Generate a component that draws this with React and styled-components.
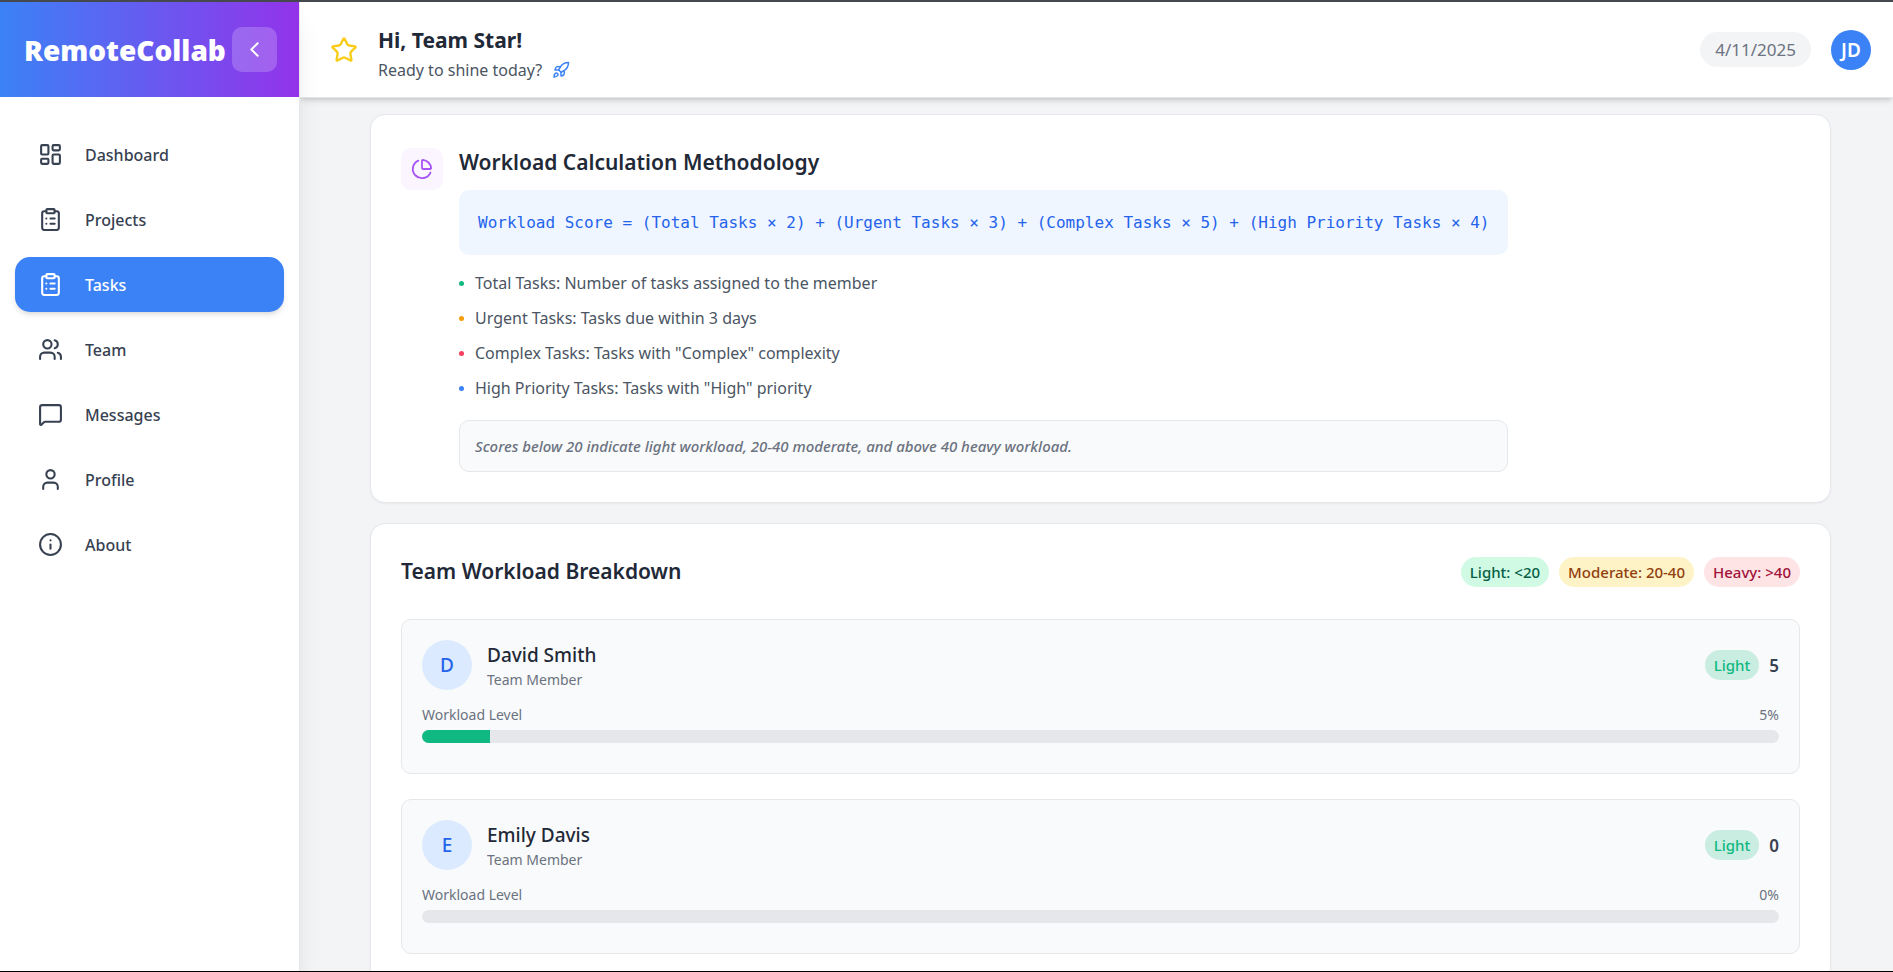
import React from 'react';
import styled, { createGlobalStyle } from 'styled-components';
import {
  ChevronLeft,
  ChartPie,
  ClipboardList,
  Info,
  LayoutDashboard,
  MessageSquare,
  Rocket,
  Star,
  User,
  Users,
} from 'lucide-react';

const GlobalStyle = createGlobalStyle`
  *, *::before, *::after { box-sizing: border-box; }
  body {
    margin: 0;
    font-family: 'Noto Sans', 'Open Sans', sans-serif;
    font-size: 16px;
    color: #1f2937;
    background: #f3f4f6;
  }
  h1, h2, h3, p, ul { margin: 0; padding: 0; }
  ul { list-style: none; }
`;

const Shell = styled.div`
  display: flex;
  height: 100vh;
  overflow: hidden;
  border-top: 2px solid #45484d;
  border-bottom: 1px solid #000;
`;

/* Sidebar */

const Sidebar = styled.aside`
  flex: 0 0 300px;
  z-index: 3;
  background: #fff;
  border-right: 1px solid #e5e7eb;
  box-shadow: 0 20px 25px -5px rgba(0, 0, 0, 0.1), 0 8px 10px -6px rgba(0, 0, 0, 0.1);
`;

const Brand = styled.div`
  display: flex;
  align-items: center;
  justify-content: space-between;
  height: 95px;
  padding: 0 22px 0 24px;
  background: linear-gradient(to right, #3b82f6, #9333ea);
`;

const BrandName = styled.h1`
  font-family: 'Open Sans', 'Noto Sans', sans-serif;
  font-size: 28px;
  line-height: 40px;
  font-weight: 900;
  color: #fff;
`;

const CollapseButton = styled.button`
  display: flex;
  flex: none;
  padding: 10px;
  border: 0;
  border-radius: 10px;
  color: #fff;
  background: rgba(255, 255, 255, 0.2);
  cursor: pointer;
`;

const Nav = styled.nav`
  display: flex;
  flex-direction: column;
  gap: 10px;
  padding: 30px 15px;
`;

const NavLink = styled.a`
  display: flex;
  align-items: center;
  gap: 22px;
  height: 55px;
  padding: 0 23px;
  border-radius: 15px;
  font-weight: 500;
  text-decoration: none;
  color: ${(p) => (p.$active ? '#fff' : '#374151')};
  background: ${(p) => (p.$active ? '#3b82f6' : 'transparent')};
  box-shadow: ${(p) =>
    p.$active ? '0 4px 6px -1px rgba(0,0,0,.1), 0 2px 4px -2px rgba(0,0,0,.1)' : 'none'};
`;

/* Top bar */

const Content = styled.div`
  display: flex;
  flex: 1;
  flex-direction: column;
  min-width: 0;
`;

const TopBar = styled.header`
  display: flex;
  flex: none;
  align-items: center;
  justify-content: space-between;
  height: 96px;
  padding: 0 22px 0 30px;
  z-index: 2;
  background: #fff;
  border-bottom: 1px solid #e5e7eb;
  box-shadow: 0 4px 6px -1px rgba(0, 0, 0, 0.12), 0 2px 4px -2px rgba(0, 0, 0, 0.12);
`;

const Cluster = styled.div`
  display: flex;
  align-items: center;
  gap: 20px;
`;

const StarIcon = styled(Star)`
  color: #facc15;
`;

const Greeting = styled.div`
  padding-top: 8px;
`;

const Hello = styled.h2`
  font-size: 21px;
  line-height: 32px;
  font-weight: 700;
`;

const Tagline = styled.p`
  display: flex;
  align-items: center;
  gap: 10px;
  line-height: 28px;
  color: #4b5563;
`;

const RocketIcon = styled(Rocket)`
  color: #3b82f6;
`;

const DateChip = styled.time`
  padding: 5px 15px;
  border-radius: 18px;
  font-size: 17px;
  line-height: 25px;
  color: #6b7280;
  background: #f3f4f6;
`;

const Avatar = styled.span`
  display: flex;
  flex: none;
  align-items: center;
  justify-content: center;
  width: ${(p) => p.$size}px;
  height: ${(p) => p.$size}px;
  border-radius: 50%;
  font-size: 19px;
  font-weight: ${(p) => (p.$solid ? 600 : 500)};
  color: ${(p) => (p.$solid ? '#fff' : '#2563eb')};
  background: ${(p) => (p.$solid ? '#3b82f6' : '#dbeafe')};
`;

/* Page body */

const Main = styled.main`
  display: flex;
  flex: 1;
  flex-direction: column;
  gap: 20px;
  min-height: 0;
  padding: 16px 62px 0 70px;
  overflow: hidden;
  background: #f3f4f6;
`;

const Card = styled.section`
  flex: none;
  padding: 30px;
  border: 1px solid #e5e7eb;
  border-radius: 15px;
  background: #fff;
  box-shadow: 0 1px 2px rgba(0, 0, 0, 0.05);
`;

const MethodCard = styled(Card)`
  display: flex;
  align-items: flex-start;
  gap: 16px;
`;

const IconTile = styled.span`
  display: flex;
  flex: none;
  margin-top: 3px;
  padding: 10px;
  border-radius: 10px;
  color: #a855f7;
  background: #faf5ff;
`;

const SectionTitle = styled.h2`
  font-size: 21px;
  line-height: 35px;
  font-weight: 600;
`;

const Formula = styled.p`
  margin-top: 10px;
  padding: 20px 19px;
  border-radius: 10px;
  font-family: 'DejaVu Sans Mono', monospace;
  font-size: 16px;
  line-height: 25px;
  color: #2563eb;
  background: #eff6ff;
`;

const FactorList = styled.ul`
  display: flex;
  flex-direction: column;
  gap: 9px;
  margin-top: 15px;
`;

const Factor = styled.li`
  display: flex;
  align-items: center;
  gap: 11px;
  line-height: 26px;
  color: #4b5563;

  &::before {
    content: '';
    width: 5px;
    height: 5px;
    border-radius: 50%;
    background: ${(p) => p.$color};
  }
`;

const Note = styled.p`
  margin-top: 19px;
  padding: 14px 15px;
  border: 1px solid #e5e7eb;
  border-radius: 10px;
  font-size: 15px;
  line-height: 22px;
  font-style: italic;
  font-weight: 500;
  color: #6b7280;
  background: #f9fafb;
`;

const Row = styled.div`
  display: flex;
  align-items: center;
  justify-content: space-between;
`;

const Legend = styled.div`
  display: flex;
  align-items: center;
  gap: 10px;
`;

const tones = {
  light: ['#065f46', '#d1fae5'],
  moderate: ['#92400e', '#fef3c7'],
  heavy: ['#9f1239', '#ffe4e6'],
  status: ['#10b981', 'rgba(16, 185, 129, 0.2)'],
};

const Pill = styled.span`
  padding: 4px 9px;
  border-radius: 15px;
  font-size: 15px;
  line-height: 22px;
  font-weight: 500;
  color: ${(p) => tones[p.$tone][0]};
  background: ${(p) => tones[p.$tone][1]};
`;

const MemberList = styled.ul`
  display: flex;
  flex-direction: column;
  gap: 25px;
  margin-top: 30px;
`;

const Member = styled.li`
  padding: 20px 20px 30px;
  border: 1px solid #e5e7eb;
  border-radius: 10px;
  background: #f9fafb;
`;

const Identity = styled.div`
  display: flex;
  gap: 15px;
`;

const MemberName = styled.h3`
  font-size: 19px;
  line-height: 30px;
  font-weight: 500;
`;

const MemberRole = styled.p`
  font-size: 14px;
  line-height: 20px;
  color: #6b7280;
`;

const Score = styled.span`
  font-size: 17px;
  font-weight: 600;
  color: #374151;
`;

const LevelRow = styled(Row)`
  margin: 14px 0 4px;
  font-size: 14px;
  line-height: 22px;
  color: #6b7280;
`;

const Track = styled.div`
  height: 13px;
  overflow: hidden;
  border-radius: 7px;
  background: #e5e7eb;
`;

const Fill = styled.div`
  height: 100%;
  background: #10b981;
`;

const navItems = [
  { label: 'Dashboard', icon: LayoutDashboard },
  { label: 'Projects', icon: ClipboardList },
  { label: 'Tasks', icon: ClipboardList, active: true },
  { label: 'Team', icon: Users },
  { label: 'Messages', icon: MessageSquare },
  { label: 'Profile', icon: User },
  { label: 'About', icon: Info },
];

const factors = [
  ['#10b981', 'Total Tasks: Number of tasks assigned to the member'],
  ['#f59e0b', 'Urgent Tasks: Tasks due within 3 days'],
  ['#f43f5e', 'Complex Tasks: Tasks with "Complex" complexity'],
  ['#3b82f6', 'High Priority Tasks: Tasks with "High" priority'],
];

const members = [
  { name: 'David Smith', score: 5 },
  { name: 'Emily Davis', score: 0 },
];

function MemberCard({ name, score }) {
  return (
    <Member>
      <Row>
        <Identity>
          <Avatar $size={50}>{name[0]}</Avatar>
          <div>
            <MemberName>{name}</MemberName>
            <MemberRole>Team Member</MemberRole>
          </div>
        </Identity>
        <Legend>
          <Pill $tone="status">Light</Pill>
          <Score>{score}</Score>
        </Legend>
      </Row>
      <LevelRow>
        <span>Workload Level</span>
        <span>{score}%</span>
      </LevelRow>
      <Track
        role="progressbar"
        aria-label={`${name} workload level`}
        aria-valuenow={score}
        aria-valuemin={0}
        aria-valuemax={100}
      >
        <Fill style={{ width: `${score}%` }} />
      </Track>
    </Member>
  );
}

export default function App() {
  return (
    <>
      <GlobalStyle />
      <Shell>
        <Sidebar>
          <Brand>
            <BrandName>RemoteCollab</BrandName>
            <CollapseButton type="button" aria-label="Collapse sidebar">
              <ChevronLeft size={25} />
            </CollapseButton>
          </Brand>
          <Nav>
            {navItems.map(({ label, icon: Icon, active }) => (
              <NavLink
                key={label}
                href={`#${label.toLowerCase()}`}
                $active={active}
                aria-current={active ? 'page' : undefined}
              >
                <Icon size={25} />
                {label}
              </NavLink>
            ))}
          </Nav>
        </Sidebar>
        <Content>
          <TopBar>
            <Cluster>
              <StarIcon size={28} />
              <Greeting>
                <Hello>Hi, Team Star!</Hello>
                <Tagline>
                  Ready to shine today?
                  <RocketIcon size={18} />
                </Tagline>
              </Greeting>
            </Cluster>
            <Cluster>
              <DateChip dateTime="2025-04-11">4/11/2025</DateChip>
              <Avatar $size={40} $solid>JD</Avatar>
            </Cluster>
          </TopBar>
          <Main>
            <MethodCard>
              <IconTile>
                <ChartPie size={22} />
              </IconTile>
              <div>
                <SectionTitle>Workload Calculation Methodology</SectionTitle>
                <Formula>
                  Workload Score = (Total Tasks × 2) + (Urgent Tasks × 3) + (Complex Tasks × 5) +
                  (High Priority Tasks × 4)
                </Formula>
                <FactorList>
                  {factors.map(([color, text]) => (
                    <Factor key={text} $color={color}>{text}</Factor>
                  ))}
                </FactorList>
                <Note>
                  Scores below 20 indicate light workload, 20-40 moderate, and above 40 heavy
                  workload.
                </Note>
              </div>
            </MethodCard>
            <Card>
              <Row>
                <SectionTitle>Team Workload Breakdown</SectionTitle>
                <Legend>
                  <Pill $tone="light">Light: &lt;20</Pill>
                  <Pill $tone="moderate">Moderate: 20-40</Pill>
                  <Pill $tone="heavy">Heavy: &gt;40</Pill>
                </Legend>
              </Row>
              <MemberList>
                {members.map((m) => (
                  <MemberCard key={m.name} {...m} />
                ))}
              </MemberList>
            </Card>
          </Main>
        </Content>
      </Shell>
    </>
  );
}
